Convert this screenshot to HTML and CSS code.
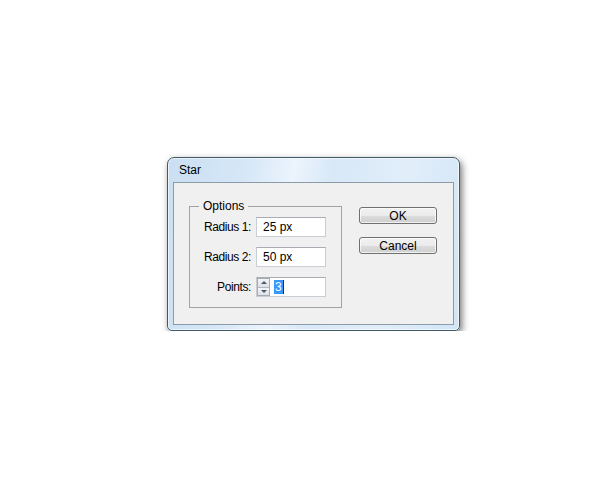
FILE: index.html
```html
<!DOCTYPE html>
<html lang="en">
<head>
    <meta charset="UTF-8">
    <title>Star</title>
    <link rel="stylesheet" href="styles.css">
</head>
<body>
    <div class="window">
        <div class="titlebar">Star</div>
        <div class="client">
            <div class="group">
                <span class="legend">Options</span>
                <div class="fields">
                    <label>Radius 1:</label>
                    <div class="textbox">25 px</div>
                    <label>Radius 2:</label>
                    <div class="textbox">50 px</div>
                    <label>Points:</label>
                    <div class="textbox spin">
                        <span class="spinner">
                            <span class="arrow up"></span>
                            <span class="arrow down"></span>
                        </span>
                        <span class="selected">3</span><span class="caret"></span>
                    </div>
                </div>
            </div>
            <div class="buttons">
                <button>OK</button>
                <button>Cancel</button>
            </div>
        </div>
    </div>
</body>
</html>
```

FILE: styles.css
```css
body {
    margin: 0;
    background: #fff;
    font-family: "Liberation Sans", Arial, sans-serif;
    font-size: 12px;
    color: #000;
}
.window {
    margin: 157px 0 0 167px;
    width: 293px;
    box-sizing: border-box;
    border: 1px solid #3f5b6b;
    border-radius: 7px 7px 5px 5px;
    padding: 0 5px 5px;
    background: linear-gradient(100deg, #cadff2 0%, #d6e7f7 25%, #ecf4fd 40%, #d8e8f7 52%, #e1eefa 75%, #d2e5f6 100%);
    box-shadow: inset 0 0 0 1px rgba(255,255,255,0.6), 2px 3px 7px rgba(0,0,0,0.55);
}
.titlebar {
    height: 24px;
    line-height: 24px;
    padding-left: 6px;
}
.client {
    display: flex;
    align-items: flex-start;
    height: 118px;
    padding: 23px 0 0 15px;
    background: #f0f0f0;
    border: 1px solid #8b9ba8;
}
.group {
    position: relative;
    width: 153px;
    height: 102px;
    box-sizing: border-box;
    border: 1px solid #a2a2a2;
    padding-top: 10px;
}
.legend {
    position: absolute;
    top: -8px;
    left: 9px;
    padding: 0 4px;
    line-height: 14px;
    background: #f0f0f0;
}
.fields {
    display: grid;
    grid-template-columns: 61px 70px;
    column-gap: 5px;
    row-gap: 10px;
    align-items: center;
}
.fields label {
    text-align: right;
    letter-spacing: -0.4px;
}
.textbox {
    display: flex;
    align-items: center;
    height: 20px;
    box-sizing: border-box;
    padding-left: 6px;
    background: #fff;
    border: 1px solid #c9ced4;
    border-top-color: #a9adb3;
}
.textbox.spin {
    padding-left: 0;
}
.spinner {
    display: flex;
    flex-direction: column;
    width: 13px;
    height: 18px;
    box-sizing: border-box;
    border: 1px solid #a6acb2;
    background: #e6e9ec;
}
.arrow {
    flex: 1;
    position: relative;
    background: linear-gradient(#f4f5f7, #dde1e5);
}
.arrow.up {
    border-bottom: 1px solid #b3b8bd;
}
.arrow::after {
    content: "";
    position: absolute;
    left: 3px;
    top: 2px;
    border-left: 3px solid transparent;
    border-right: 3px solid transparent;
}
.arrow.up::after {
    border-bottom: 3px solid #4a5a6a;
}
.arrow.down::after {
    border-top: 3px solid #4a5a6a;
}
.selected {
    margin-left: 4px;
    padding: 0 1px;
    line-height: 14px;
    background: #3399ff;
    color: #fff;
}
.caret {
    width: 1px;
    height: 14px;
    background: #3a2a10;
}
.buttons {
    display: flex;
    flex-direction: column;
    gap: 13px;
    margin: 1px 0 0 17px;
}
.buttons button {
    width: 78px;
    height: 17px;
    padding: 0;
    font-family: inherit;
    font-size: 12px;
    color: #000;
    border: 1px solid #707070;
    border-radius: 3px;
    background: linear-gradient(#f2f2f2 0%, #ebebeb 50%, #dddddd 50%, #cfcfcf 100%);
    box-shadow: inset 0 0 0 1px rgba(255,255,255,0.7);
}
```
